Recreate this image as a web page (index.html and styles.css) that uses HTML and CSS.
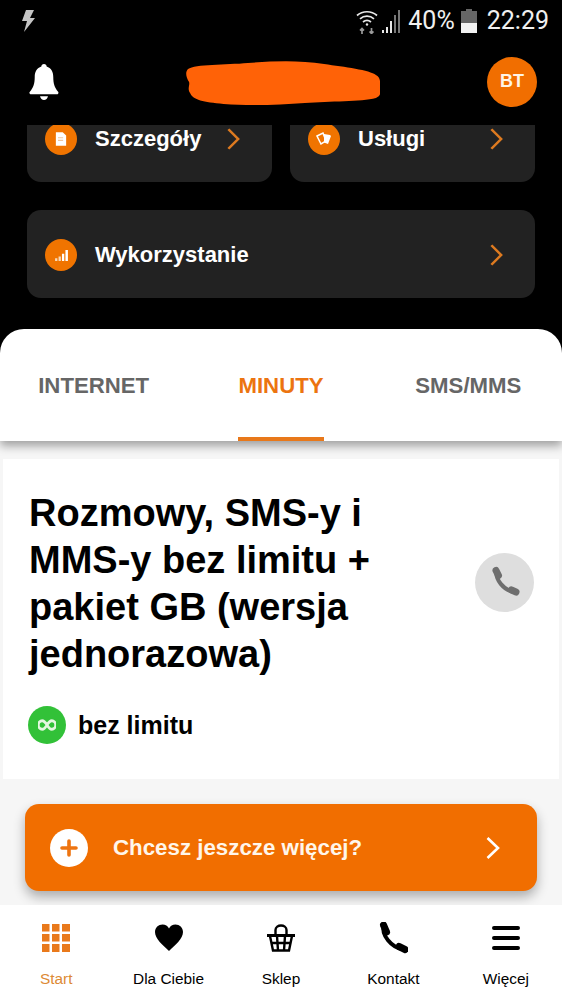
FILE: index.html
```html
<!DOCTYPE html>
<html lang="pl">
<head>
<meta charset="utf-8">
<title>Minuty</title>
<link rel="stylesheet" href="styles.css">
</head>
<body>
<div class="app">
  <div class="status">
    <svg class="bolt" width="14" height="24" viewBox="0 0 14 24"><path d="M5 1h8L9 9h5L3 23l3-11H1z" fill="#c4c4c4"/></svg>
    <div class="status-right">
      <svg class="wifi" width="22" height="25" viewBox="0 0 22 25" fill="none" stroke="#e8e8e8" stroke-width="1.7"><path d="M1 6.500C6.500 1.500 15.500 1.500 21 6.500"/><path d="M4 9.800c4-3.500 10-3.500 14 0"/><path d="M7 13c2.400-2 5.600-2 8 0"/><circle cx="11" cy="15.500" r="1.200" fill="#e8e8e8" stroke="none"/><path d="M6 25v-5M4 21.500l2-2 2 2M15.500 19v5M13.500 22.500l2 2 2-2" stroke="#9a9a9a"/></svg>
      <svg class="signal" width="20" height="24" viewBox="0 0 20 24"><path d="M0 21h2v3H0zM4 18h2v6H4zM8 12h2v12H8z" fill="#e8e8e8"/><path d="M12 6h2v18h-2zM16 1h2v23h-2z" fill="#777"/></svg>
      <span class="pct">40%</span>
      <svg class="battery" width="16" height="24" viewBox="0 0 16 24"><path d="M5 0h6v2h5v12H0V2h5z" fill="#666"/><path d="M0 14h16v10H0z" fill="#f2f2f2"/></svg>
      <span class="clock">22:29</span>
    </div>
  </div>

  <header class="top">
    <svg class="bell" width="30" height="38" viewBox="0 0 34 40" preserveAspectRatio="none"><path d="M17 1c1.800 0 3 1.200 3 2.800 5 1.500 7.500 5.500 7.500 11 0 7 1.500 11 5.500 15.500.8 1 .3 2.700-1.200 2.700H2.200C.7 33-.2 31.300 1 30.300 5 25.800 6.500 21.800 6.500 14.800c0-5.500 2.500-9.500 7.500-11C14 2.200 15.200 1 17 1z" fill="#fff"/><path d="M12.500 35h9c-.5 2.500-2.300 4-4.500 4s-4-1.500-4.500-4z" fill="#fff"/></svg>
    <svg class="blob" width="195" height="46" viewBox="0 0 192 46" preserveAspectRatio="none"><path d="M3 9C10 4 40 5 62 3c25-2 50-3 75 1 20 3 45 6 51 11 5 3 4 7 4 12 0 5 2 8-4 11-15 4-45 3-70 5-25 2-55 3-80 1C18 42 8 40 5 33c-3-4 0-8-1-11C1 17 0 12 3 9z" fill="#ff6207"/></svg>
    <div class="avatar">BT</div>
  </header>

  <div class="scroller">
    <div class="tiles">
      <a class="tile">
        <span class="dot"><svg width="12" height="14" viewBox="0 0 14 16"><path d="M1 0h8l4 4v12H1z" fill="#fff"/><path d="M3.500 6h6v1.200h-6zM3.500 9h6v1.200h-6z" fill="#f1c59c"/></svg></span>
        <span class="tile-label">Szczegóły</span>
        <svg class="chev" width="13" height="22" viewBox="0 0 14 26" preserveAspectRatio="none"><path d="M1.500 1.500L12 13 1.500 24.500" fill="none" stroke="#dd7a20" stroke-width="2.800"/></svg>
      </a>
      <a class="tile">
        <span class="dot"><svg width="18" height="16" viewBox="0 0 18 16"><path d="M2 5l6-3 3 8-5 3z" fill="none" stroke="#fff" stroke-width="1.500"/><path d="M9 3l6 1 1 1-3 8-4-1.500z" fill="#fff"/></svg></span>
        <span class="tile-label">Usługi</span>
        <svg class="chev" width="13" height="22" viewBox="0 0 14 26" preserveAspectRatio="none"><path d="M1.500 1.500L12 13 1.500 24.500" fill="none" stroke="#dd7a20" stroke-width="2.800"/></svg>
      </a>
      <a class="tile tile-wide">
        <span class="dot"><svg width="13" height="11" viewBox="0 0 14 12"><path d="M0 9h2.500v3H0zM3.800 7h2.500v5H3.800z" fill="#f8d9b8"/><path d="M7.500 4H10v8H7.500zM11.300 0h2.700v12h-2.700z" fill="#fff"/></svg></span>
        <span class="tile-label">Wykorzystanie</span>
        <svg class="chev" width="13" height="22" viewBox="0 0 14 26" preserveAspectRatio="none"><path d="M1.500 1.500L12 13 1.500 24.500" fill="none" stroke="#dd7a20" stroke-width="2.800"/></svg>
      </a>
    </div>
  </div>

  <nav class="tabs">
    <a class="tab"><span class="tab-text">INTERNET</span></a>
    <a class="tab tab-on"><span class="tab-text">MINUTY</span></a>
    <a class="tab"><span class="tab-text">SMS/MMS</span></a>
  </nav>

  <main class="content">
    <section class="plan">
      <div class="plan-head">
        <h1 class="plan-title">Rozmowy, SMS-y i MMS-y bez limitu + pakiet GB (wersja jednorazowa)</h1>
        <span class="plan-icon"><svg width="32" height="32" viewBox="0 0 32 32"><path d="M7.500 6C6.500 13 14 24 25 26" fill="none" stroke="#6e6e6e" stroke-width="4"/><path d="M7 4.500l2.500 5" stroke="#6e6e6e" stroke-width="7" stroke-linecap="round"/><path d="M22.500 24l4.500 2" stroke="#6e6e6e" stroke-width="7" stroke-linecap="round"/></svg></span>
      </div>
      <div class="limit">
        <span class="limit-dot"><svg width="18" height="12" viewBox="0 0 24 14" preserveAspectRatio="none"><path d="M12 7c-2-3-4-5-6.500-5a5 5 0 0 0 0 10C8 12 10 10 12 7c2-3 4-5 6.500-5a5 5 0 0 1 0 10C16 12 14 10 12 7z" fill="none" stroke="#e4f7e0" stroke-width="3.500"/></svg></span>
        <span class="limit-text">bez limitu</span>
      </div>
    </section>

    <a class="more">
      <span class="more-dot"><svg width="18" height="18" viewBox="0 0 18 18"><path d="M9 2v14M2 9h14" stroke="#ee7410" stroke-width="3.600" stroke-linecap="round"/></svg></span>
      <span class="more-text">Chcesz jeszcze więcej?</span>
      <svg class="more-chev" width="14" height="24" viewBox="0 0 14 24"><path d="M1.500 2L12 12 1.500 22" fill="none" stroke="#fff" stroke-width="2.600"/></svg>
    </a>
  </main>

  <footer class="bar">
    <a class="bar-item bar-on">
      <svg width="28" height="28" viewBox="0 0 28 28" fill="#e9791b"><path d="M0 0h7.500v7.500H0zM10 0h7.500v7.500H10zM20 0h8v7.500h-8zM0 10h7.500v7.500H0zM10 10h7.500v7.500H10zM20 10h8v7.500h-8zM0 20h7.500v8H0zM10 20h7.500v8H10zM20 20h8v8h-8z"/></svg>
      <span>Start</span>
    </a>
    <a class="bar-item">
      <svg width="28" height="28" viewBox="0 0 28 28"><path d="M14 27C8 21 0 15 0 8c0-4.500 3.500-7.500 7.500-7.500 3 0 5.200 1.500 6.500 4 1.300-2.500 3.500-4 6.500-4C24.500.5 28 3.500 28 8c0 7-8 13-14 19z"/></svg>
      <span>Dla Ciebie</span>
    </a>
    <a class="bar-item">
      <svg width="30" height="28" viewBox="0 0 30 28" fill="none" stroke="#000" stroke-width="2.400"><path d="M9.500 11V6c0-6 11-6 11 0v5"/><path d="M1 11.500h28" stroke-width="3"/><path d="M4 12l3 14.500h16L26 12M11 12l1 14.500M19 12l-1 14.500M5 19h20"/></svg>
      <span>Sklep</span>
    </a>
    <a class="bar-item">
      <svg width="30" height="32" viewBox="0 0 30 32"><path d="M6 4C3 12 13 26 26 27.500" fill="none" stroke="#000" stroke-width="4"/><path d="M5.500 3l3 7" stroke="#000" stroke-width="7" stroke-linecap="round"/><path d="M21 24.500l6 3" stroke="#000" stroke-width="7" stroke-linecap="round"/></svg>
      <span>Kontakt</span>
    </a>
    <a class="bar-item">
      <svg width="28" height="26" viewBox="0 0 28 26"><path d="M2 3h24M2 13h24M2 23h24" stroke="#000" stroke-width="4" stroke-linecap="round"/></svg>
      <span>Więcej</span>
    </a>
  </footer>
</div>
</body>
</html>
```

FILE: styles.css
```css
* { box-sizing: border-box; }
html, body { margin: 0; padding: 0; background: #000; }
a { color: inherit; text-decoration: none; }

.app {
  width: 562px;
  height: 999px;
  overflow: hidden;
  display: flex;
  flex-direction: column;
  font-family: "Liberation Sans", Arial, sans-serif;
  background: #000;
}

.status {
  flex: none;
  height: 38px;
  padding: 9px 13px 0 21px;
  display: flex;
  align-items: flex-start;
  justify-content: space-between;
  color: #f0f0f0;
  font-family: Roboto, sans-serif;
  font-size: 25px;
  line-height: 24px;
}
.status-right { display: flex; align-items: flex-start; }
.signal { margin-left: 4px; }
.pct { margin-left: 6px; }
.battery { margin-left: 6px; }
.clock { margin-left: 10px; }

.top {
  flex: none;
  height: 87px;
  padding: 0 25px 0 29px;
  display: flex;
  align-items: center;
  justify-content: space-between;
}
.blob { margin: 0 0 -2px 19px; }
.avatar {
  width: 50px;
  height: 50px;
  border-radius: 50%;
  background: #f16e00;
  color: #fff4e6;
  font-size: 18px;
  font-weight: 700;
  display: flex;
  align-items: center;
  justify-content: center;
}

.scroller {
  flex: none;
  height: 204px;
  overflow: hidden;
}
.tiles {
  margin-top: -31px;
  padding: 0 27px;
  display: grid;
  grid-template-columns: 1fr 1fr;
  column-gap: 18px;
  row-gap: 28px;
}
.tile {
  height: 88px;
  padding: 2px 32px 0 18px;
  background: #222;
  border-radius: 14px;
  display: flex;
  align-items: center;
  color: #fff;
}
.tile-wide { grid-column: 1 / -1; }
.dot {
  flex: none;
  width: 32px;
  height: 32px;
  border-radius: 50%;
  background: #f07400;
  display: flex;
  align-items: center;
  justify-content: center;
}
.tile-label {
  flex: 1;
  margin-left: 18px;
  font-size: 22px;
  font-weight: 700;
}
.chev { flex: none; }

.tabs {
  flex: none;
  position: relative;
  z-index: 2;
  height: 112px;
  display: grid;
  grid-template-columns: repeat(3, 1fr);
  background: #fff;
  border-radius: 24px 24px 0 0;
  box-shadow: 0 5px 10px rgba(0, 0, 0, .35);
}
.tab {
  display: flex;
  justify-content: center;
  color: #666;
  font-size: 22.2px;
  font-weight: 700;
}
.tab-text {
  display: flex;
  align-items: center;
  padding-top: 6px;
  border-bottom: 4px solid transparent;
}
.tab-on { color: #ec7410; }
.tab-on .tab-text { border-bottom-color: #e8781a; }

.content {
  flex: none;
  height: 464px;
  overflow: hidden;
  padding: 18px 3px 0;
  background: #f6f6f6;
}
.plan {
  height: 320px;
  padding: 31px 25px 0 25px;
  background: #fff;
}
.plan-head {
  display: flex;
  align-items: center;
  justify-content: space-between;
}
.plan-title {
  margin: 0 0 0 1px;
  max-width: 400px;
  color: #000;
  font-size: 38px;
  line-height: 47px;
  font-weight: 700;
}
.plan-icon {
  flex: none;
  width: 59px;
  height: 59px;
  margin-bottom: 4px;
  border-radius: 50%;
  background: #dedede;
  display: flex;
  align-items: center;
  justify-content: center;
}
.limit {
  margin-top: 28px;
  display: flex;
  align-items: center;
  gap: 12px;
}
.limit-dot {
  flex: none;
  width: 38px;
  height: 38px;
  border-radius: 50%;
  background: #32c138;
  display: flex;
  align-items: center;
  justify-content: center;
}
.limit-text {
  color: #000;
  font-size: 25px;
  font-weight: 700;
}

.more {
  height: 87px;
  margin: 25px 22px 0;
  padding: 0 37px 0 25px;
  display: flex;
  align-items: center;
  background: #f16e00;
  border-radius: 14px;
  color: #fff6ea;
  box-shadow: 0 6px 12px rgba(0, 0, 0, .3);
}
.more-dot {
  flex: none;
  width: 38px;
  height: 38px;
  border-radius: 50%;
  background: #fff;
  display: flex;
  align-items: center;
  justify-content: center;
}
.more-text {
  flex: 1;
  margin-left: 25px;
  font-size: 22.3px;
  font-weight: 700;
}

.bar {
  flex: none;
  height: 94px;
  display: grid;
  grid-template-columns: repeat(5, 1fr);
  background: #fff;
  color: #000;
}
.bar-item {
  padding-top: 17px;
  display: flex;
  flex-direction: column;
  align-items: center;
  font-size: 15.4px;
  line-height: 18px;
}
.bar-item svg { height: 32px; }
.bar-item span { margin-top: 16px; }
.bar-on { color: #dd8a35; }
```
